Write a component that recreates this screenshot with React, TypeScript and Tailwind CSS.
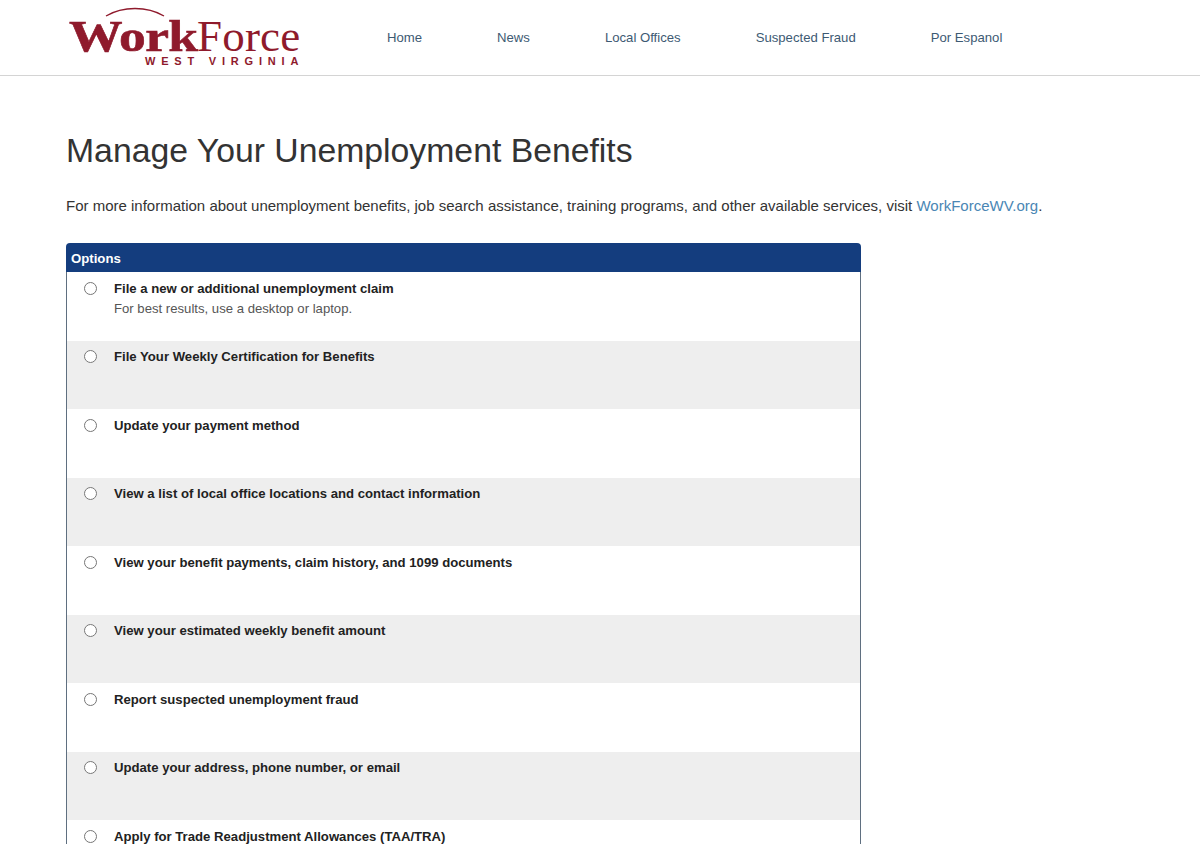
const NAV_LINKS = ['Home', 'News', 'Local Offices', 'Suspected Fraud', 'Por Espanol'];

const OPTIONS = [
  { label: 'File a new or additional unemployment claim', hint: 'For best results, use a desktop or laptop.' },
  { label: 'File Your Weekly Certification for Benefits' },
  { label: 'Update your payment method' },
  { label: 'View a list of local office locations and contact information' },
  { label: 'View your benefit payments, claim history, and 1099 documents' },
  { label: 'View your estimated weekly benefit amount' },
  { label: 'Report suspected unemployment fraud' },
  { label: 'Update your address, phone number, or email' },
  { label: 'Apply for Trade Readjustment Allowances (TAA/TRA)' },
];

function Logo() {
  return (
    <div className="relative h-[75px] w-[240px] shrink-0 text-[#8f1a2c] [font-family:'Liberation_Serif',serif]">
      <svg className="absolute left-[39px] top-[7px]" width="60" height="10" viewBox="0 0 60 10" aria-hidden>
        <path d="M1 9C18 -1 42 -1 59 9" fill="none" stroke="#8f1a2c" strokeWidth="1.3" />
      </svg>
      <div className="absolute left-[3px] top-[19px] flex whitespace-nowrap text-[45px] leading-[34px]">
        <span className="w-[128px] origin-left scale-x-[1.19] font-bold tracking-[-0.5px] [-webkit-text-stroke:0.6px_#8f1a2c]">Work</span>
        <span className="tracking-[0.2px]">Force</span>
      </div>
      <div className="absolute left-[79px] top-[56px] whitespace-nowrap text-[11px] font-bold leading-[10px] tracking-[5.8px] [font-family:'Liberation_Sans',sans-serif]">
        WEST VIRGINIA
      </div>
    </div>
  );
}

export default function App() {
  return (
    <div className="h-[844px] overflow-hidden bg-white [font-family:'Liberation_Sans',Arial,sans-serif]">
      <header className="flex h-[76px] items-center border-b border-[#d4d4d4] pl-[66px]">
        <Logo />
        <nav className="ml-[81px] flex gap-[75px] text-[13.15px] text-[#3d5a73]">
          {NAV_LINKS.map((link) => (
            <a key={link} href="#" className="leading-[20px]">
              {link}
            </a>
          ))}
        </nav>
      </header>

      <main className="px-[66px]">
        <h1 className="mt-[54px] text-[33.75px] font-normal leading-[40px] text-[#333333]">
          Manage Your Unemployment Benefits
        </h1>
        <p className="mt-[26px] text-[15px] leading-[20px] text-[#333333]">
          For more information about unemployment benefits, job search assistance, training programs, and other available services, visit{' '}
          <a href="#" className="text-[#4a86b4]">WorkForceWV.org</a>.
        </p>

        <section className="mt-[27px] w-[795px]">
          <div className="h-[29px] rounded-t bg-[#143d7e] px-[5px] text-[13.2px] font-bold leading-[31px] text-white">
            Options
          </div>
          <ul className="border-x border-[#5f6f80]">
            {OPTIONS.map((option) => (
              <li key={option.label} className="flex h-[68.5px] pl-[17px] pt-[7.5px] even:bg-[#eeeeee]">
                <input type="radio" name="option" className="mt-[2px] h-[13px] w-[13px]" />
                <div className="ml-[17px] text-[#222222]">
                  <div className="text-[13.15px] font-bold leading-[18px]">{option.label}</div>
                  {option.hint && <div className="mt-[2px] text-[13.15px] leading-[18px] text-[#555555]">{option.hint}</div>}
                </div>
              </li>
            ))}
          </ul>
        </section>
      </main>
    </div>
  );
}
